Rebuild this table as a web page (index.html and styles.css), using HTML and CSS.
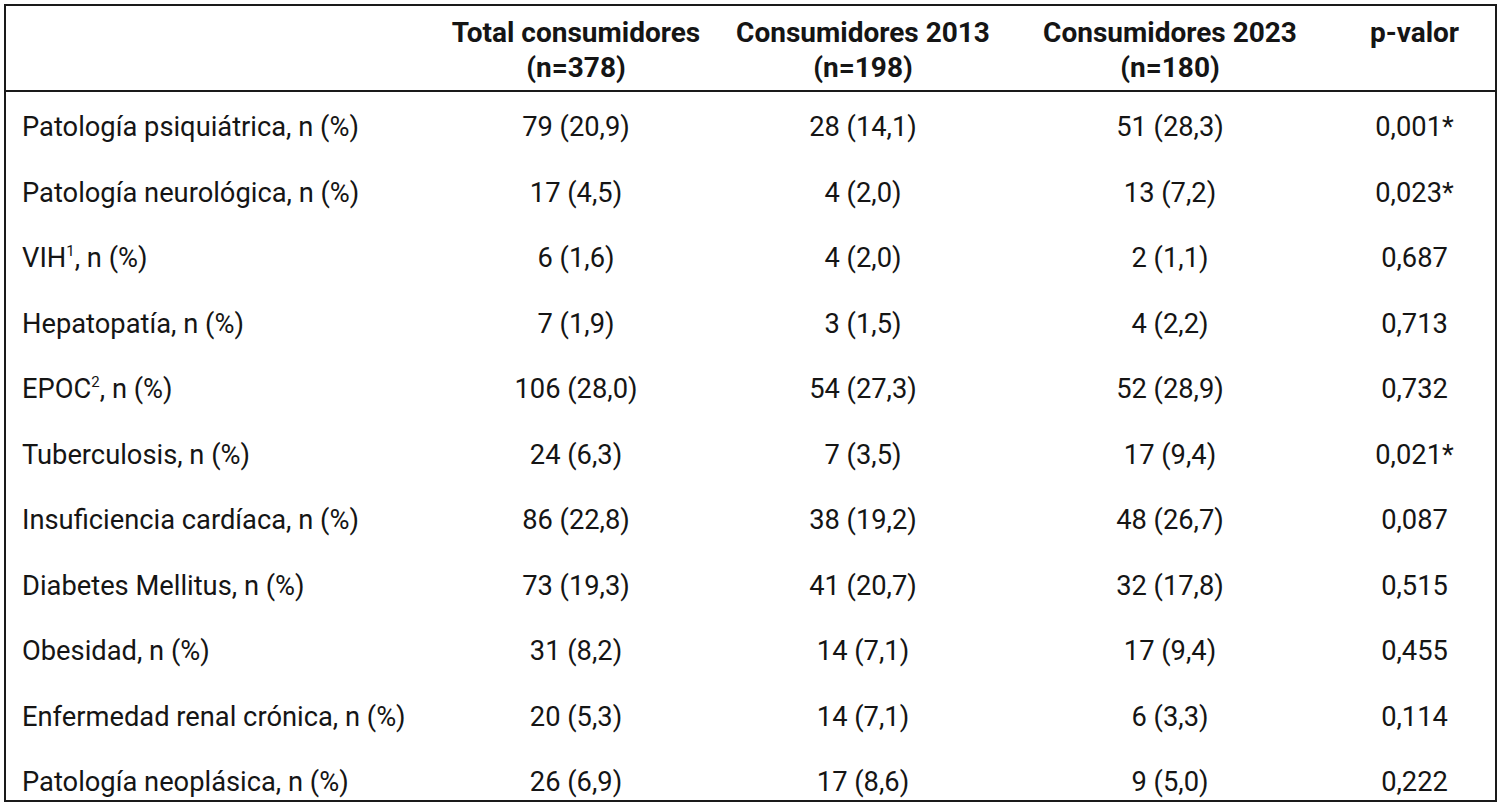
FILE: index.html
```html
<!DOCTYPE html>
<html lang="es">
<head>
<meta charset="utf-8">
<title>Comorbilidades</title>
<link rel="stylesheet" href="styles.css">
</head>
<body>
<table class="data">
  <colgroup>
    <col class="c1"><col class="c2"><col class="c3"><col class="c4"><col class="c5">
  </colgroup>
  <thead>
    <tr class="head">
      <th class="label"></th>
      <th>Total consumidores<br>(n=378)</th>
      <th>Consumidores 2013<br>(n=198)</th>
      <th>Consumidores 2023<br>(n=180)</th>
      <th class="top">p-valor</th>
    </tr>
  </thead>
  <tbody>
    <tr><td class="label">Patología psiquiátrica, n (%)</td><td>79 (20,9)</td><td>28 (14,1)</td><td>51 (28,3)</td><td>0,001*</td></tr>
    <tr><td class="label">Patología neurológica, n (%)</td><td>17 (4,5)</td><td>4 (2,0)</td><td>13 (7,2)</td><td>0,023*</td></tr>
    <tr><td class="label">VIH<sup>1</sup>, n (%)</td><td>6 (1,6)</td><td>4 (2,0)</td><td>2 (1,1)</td><td>0,687</td></tr>
    <tr><td class="label">Hepatopatía, n (%)</td><td>7 (1,9)</td><td>3 (1,5)</td><td>4 (2,2)</td><td>0,713</td></tr>
    <tr><td class="label">EPOC<sup>2</sup>, n (%)</td><td>106 (28,0)</td><td>54 (27,3)</td><td>52 (28,9)</td><td>0,732</td></tr>
    <tr><td class="label">Tuberculosis, n (%)</td><td>24 (6,3)</td><td>7 (3,5)</td><td>17 (9,4)</td><td>0,021*</td></tr>
    <tr><td class="label">Insuficiencia cardíaca, n (%)</td><td>86 (22,8)</td><td>38 (19,2)</td><td>48 (26,7)</td><td>0,087</td></tr>
    <tr><td class="label">Diabetes Mellitus, n (%)</td><td>73 (19,3)</td><td>41 (20,7)</td><td>32 (17,8)</td><td>0,515</td></tr>
    <tr><td class="label">Obesidad, n (%)</td><td>31 (8,2)</td><td>14 (7,1)</td><td>17 (9,4)</td><td>0,455</td></tr>
    <tr><td class="label">Enfermedad renal crónica, n (%)</td><td>20 (5,3)</td><td>14 (7,1)</td><td>6 (3,3)</td><td>0,114</td></tr>
    <tr class="last"><td class="label">Patología neoplásica, n (%)</td><td>26 (6,9)</td><td>17 (8,6)</td><td>9 (5,0)</td><td>0,222</td></tr>
  </tbody>
</table>
</body>
</html>
```
FILE: styles.css
```css
html, body {
  margin: 0;
  padding: 0;
  background: #ffffff;
}

body {
  font-family: Roboto, "Liberation Sans", sans-serif;
  color: #151515;
}

.data {
  margin: 4px 0 0 4px;
  width: 1491px;
  table-layout: fixed;
  border-collapse: collapse;
  border: 2px solid #1a1a1a;
  font-size: 27.3px;
}

.c1 { width: 427px; }
.c2 { width: 288px; }
.c3 { width: 286px; }
.c4 { width: 328px; }
.c5 { width: 162px; }

.data th {
  font-weight: 700;
  font-size: 28px;
  text-align: center;
  vertical-align: top;
  line-height: 35px;
  padding: 9px 0 0 0;
  border-bottom: 2px solid #1a1a1a;
}

.data tr.head {
  height: 86px;
}

.data td {
  text-align: center;
  line-height: 30px;
  padding: 20px 0 15.5px 0;
}

.data td.label {
  text-align: left;
  padding-left: 16px;
}

.data tr.last td {
  padding-bottom: 3px;
}

.data sup {
  font-size: 15px;
  line-height: 0;
  vertical-align: 11px;
}
```
